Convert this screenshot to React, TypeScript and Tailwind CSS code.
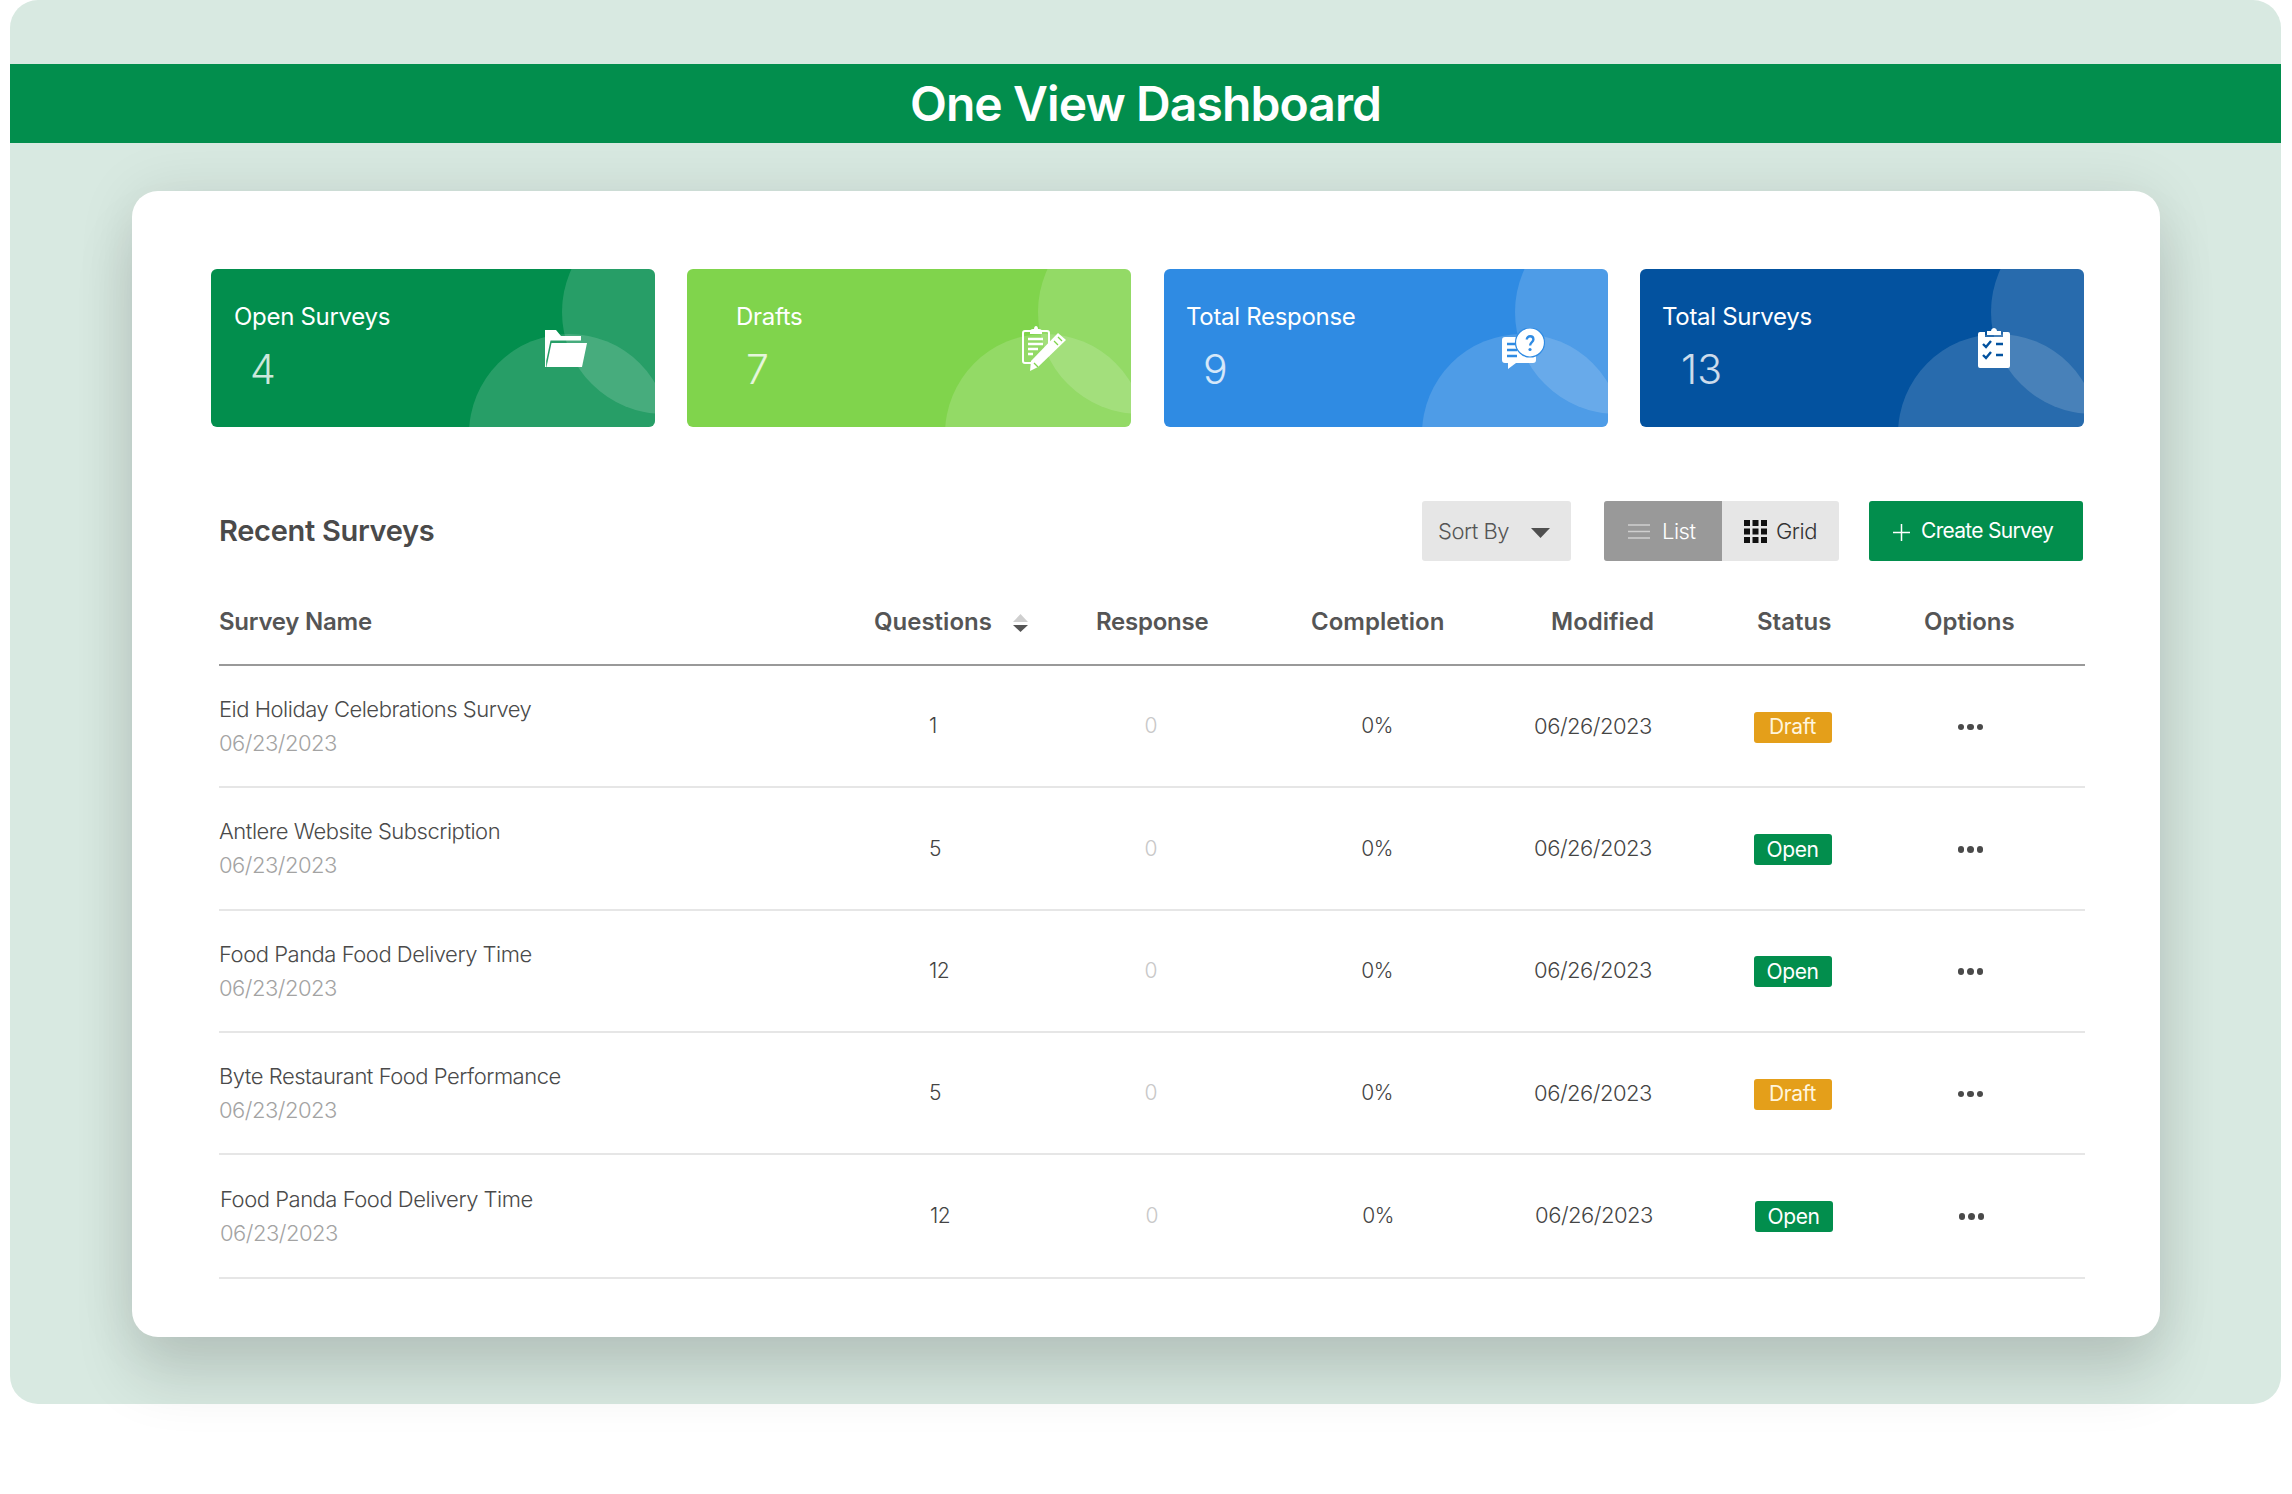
import React from "react";

const font = { fontFamily: "Inter, 'Noto Sans', sans-serif" };

function FolderIcon() {
  return (
    <svg width="42" height="37" viewBox="0 0 42 37" fill="#fff">
      <path d="M0 0H11L16 6H36V10.5H5.5L1.2 31V37H0Z" />
      <path d="M6.5 13H42L37 37H1.5Z" />
    </svg>
  );
}
function DraftIcon({ color }: { color: string }) {
  return (
    <svg width="45" height="45" viewBox="0 0 45 45" fill="none">
      <path d="M6 5H26a2 2 0 0 1 2 2V19L11 37H4a2 2 0 0 1-2-2V7a2 2 0 0 1 2-2Z" fill="none" stroke="#fff" strokeWidth="2" />
      <path d="M9 5c0-1 1-2 3-2h1c0-2 1-3 2-3s2 1 2 3h1c2 0 3 1 3 2v3H9Z" fill="#fff" />
      <path d="M7 13H22M7 18H22M7 23H17M7 28H12" stroke="#fff" strokeWidth="2.4" />
      <path d="M37 7 45 14 17 41 9 45 10 35Z" fill="#fff" />
      <path d="M37 11 41 15M33 15 37 19M13 37 17 41" stroke={color} strokeWidth="1.3" />
    </svg>
  );
}
function ResponseIcon({ color }: { color: string }) {
  return (
    <svg width="43" height="41" viewBox="0 0 43 41" fill="none">
      <path d="M3 9H22V28H34V32a3 3 0 0 1-3 3H14L6 41 6 35H3a3 3 0 0 1-3-3V12a3 3 0 0 1 3-3Z" fill="#fff" />
      <path d="M5 16H15M5 22H15M5 28H15" stroke={color} strokeWidth="2.4" />
      <circle cx="28" cy="14.5" r="14.5" fill="#fff" stroke={color} strokeWidth="1.2" />
      <path d="M24.8 11.5c0-4.3 6.6-4.3 6.6 0 0 2.6-3.3 2.6-3.3 6" stroke={color} strokeWidth="2.4" />
      <circle cx="28" cy="21.5" r="1.6" fill={color} />
    </svg>
  );
}
function SurveyIcon({ color }: { color: string }) {
  return (
    <svg width="32" height="40" viewBox="0 0 32 40" fill="none">
      <path d="M2 4H7V9H25V4H30a2 2 0 0 1 2 2V38a2 2 0 0 1-2 2H2a2 2 0 0 1-2-2V6a2 2 0 0 1 2-2Z" fill="#fff" />
      <path d="M9 7V3H13C13 1 15 0 16 0S19 1 19 3H23V7Z" fill="#fff" />
      <path d="M5 16 8 19 13 13M5 27 8 30 13 24" stroke={color} strokeWidth="2.4" />
      <path d="M18 16H25M18 27H25" stroke={color} strokeWidth="2.4" />
    </svg>
  );
}

function StatCard({ label, value, labelClass, valueClass, bg, gapClass, icon, iconClass }: {
  label: string; value: string; labelClass: string; valueClass: string; bg: string; gapClass: string; icon: React.ReactNode; iconClass: string;
}) {
  return (
    <div className={`relative h-[158px] w-[444px] shrink-0 overflow-hidden rounded-[6px] ${bg} ${gapClass}`}>
      <div className="absolute left-[258px] top-[65px] size-[200px] rounded-full bg-white/15" />
      <div className="absolute left-[351px] top-[-59px] size-[204px] rounded-full bg-white/15" />
      <div className={`relative pt-[32px] text-[24px] leading-[32px] tracking-[-0.3px] text-white ${labelClass}`}>{label}</div>
      <div className={`relative mt-[11px] text-[41px] font-light leading-[50px] text-white/80 ${valueClass}`}>{value}</div>
      <div className={`absolute ${iconClass}`}>{icon}</div>
    </div>
  );
}

const rows = [
  { name: "Eid Holiday Celebrations Survey", q: "1", status: "Draft" },
  { name: "Antlere Website Subscription", q: "5", status: "Open" },
  { name: "Food Panda Food Delivery Time", q: "12", status: "Open" },
  { name: "Byte Restaurant Food Performance", q: "5", status: "Draft" },
  { name: "Food Panda Food Delivery Time", q: "12", status: "Open", last: true },
];

function Row({ name, q, status, last }: { name: string; q: string; status: string; last?: boolean }) {
  return (
    <div className={`grid grid-cols-[710px_122px_200px_252px_180px_219px_137px_45px] items-center border-b-2 border-[#e6e6e6] text-[#555] ${last ? "h-[124px] pb-[1px] pl-px" : "h-[122.3px]"}`}>
      <div>
        <div className="text-[22px] font-light leading-[30px] tracking-[-0.48px] text-[#4a4a4a]">{name}</div>
        <div className="mt-[4px] text-[22px] font-light leading-[30px] tracking-[-0.5px] text-[#a3a3a3]">06/23/2023</div>
      </div>
      <div className="text-[21px] font-light tracking-[-0.5px] text-[#444]">{q}</div>
      <div className="text-center text-[21px] font-light text-[#c8c8c8]">0</div>
      <div className="text-center text-[21px] font-light tracking-[-0.5px] text-[#444]">0%</div>
      <div className="text-center text-[22px] font-light tracking-[-0.5px] text-[#444]">06/26/2023</div>
      <div className="flex justify-center pt-[2px]">
        <span className={`flex h-[31px] w-[78px] items-center justify-center rounded-[3px] text-[21px] tracking-[-0.4px] ${status === "Draft" ? "bg-[#e49f1a] text-[#fff5dd]" : "bg-[#028e4d] text-white"}`}>{status}</span>
      </div>
      <div className="flex justify-center gap-[3px] pt-[2px]">
        <span className="size-[6.5px] rounded-full bg-[#4a4a4a]" />
        <span className="size-[6.5px] rounded-full bg-[#4a4a4a]" />
        <span className="size-[6.5px] rounded-full bg-[#4a4a4a]" />
      </div>
      <div />
    </div>
  );
}

export default function App() {
  return (
    <div className="h-[1494px] w-full overflow-hidden bg-white pl-[10px] pr-[11px]" style={font}>
      <div className="h-[1404px] rounded-[28px] bg-[#d8e9e1] pt-[64px]">
        <div className="flex h-[79px] items-center justify-center bg-[#028e4d] text-[48px] font-semibold tracking-[-0.9px] text-white">
          One View Dashboard
        </div>
        <div className="ml-[122px] mr-[121px] mt-[48px] h-[1146px] rounded-[26px] bg-white pl-[79px] pr-[74px] pt-[78px] shadow-[0_42px_60px_rgba(0,0,0,0.12),0_0_60px_rgba(0,0,0,0.09)]">
          <div className="flex">
            <StatCard label="Open Surveys" value="4" labelClass="pl-[23px]" valueClass="pl-[39px]" bg="bg-[#028e4d]" gapClass="" icon={<FolderIcon />} iconClass="left-[334px] top-[61px]" />
            <StatCard label="Drafts" value="7" labelClass="pl-[49px]" valueClass="pl-[59px]" bg="bg-[#80d44c]" gapClass="ml-[32px]" icon={<DraftIcon color="#80d44c" />} iconClass="left-[334px] top-[57px]" />
            <StatCard label="Total Response" value="9" labelClass="pl-[22px]" valueClass="pl-[39px]" bg="bg-[#2f8be3]" gapClass="ml-[33px]" icon={<ResponseIcon color="#2f8be3" />} iconClass="left-[338px] top-[59px]" />
            <StatCard label="Total Surveys" value="13" labelClass="pl-[22px]" valueClass="pl-[41px]" bg="bg-[#03529f]" gapClass="ml-[32px]" icon={<SurveyIcon color="#03529f" />} iconClass="left-[338px] top-[59px]" />
          </div>

          <div className="mt-[74px] flex h-[60px] items-center pl-[8px] pr-[3px]">
            <div className="mr-auto text-[29px] font-semibold tracking-[-0.3px] text-[#4a4a4a]">Recent Surveys</div>
            <div className="flex h-[60px] w-[149px] items-center rounded-[3px] bg-[#e6e6e6] pl-[16px] text-[22px] font-light tracking-[-0.5px] text-[#555]">
              Sort By
              <svg className="ml-[22px] mt-[3px]" width="19" height="10" viewBox="0 0 19 10"><path d="M0 0H19L9.5 10Z" fill="#4f4f4f" /></svg>
            </div>
            <div className="ml-[33px] flex h-[60px] w-[235px] overflow-hidden rounded-[3px] bg-[#e6e6e6] text-[22px] font-light tracking-[-0.5px]">
              <div className="flex w-[118px] items-center bg-[#999] pl-[24px] text-white">
                <svg width="22" height="15" viewBox="0 0 22 15" stroke="#cfcfcf" strokeWidth="1.5"><path d="M0 1H22M0 7.5H22M0 14H22" /></svg>
                <span className="ml-[12px]">List</span>
              </div>
              <div className="flex items-center pl-[22px] text-[#333]">
                <svg width="23" height="23" viewBox="0 0 23 23" fill="#111">
                  <path d="M0 0H6V6H0ZM8.5 0H14.5V6H8.5ZM17 0H23V6H17ZM0 8.5H6V14.5H0ZM8.5 8.5H14.5V14.5H8.5ZM17 8.5H23V14.5H17ZM0 17H6V23H0ZM8.5 17H14.5V23H8.5ZM17 17H23V23H17Z" />
                </svg>
                <span className="ml-[9px]">Grid</span>
              </div>
            </div>
            <div className="ml-[30px] flex h-[60px] w-[214px] items-center rounded-[3px] bg-[#028e4d] pl-[24px] text-[21px] tracking-[-0.7px] text-white">
              <svg className="mt-[2px]" width="17" height="17" viewBox="0 0 17 17" stroke="#fff" strokeWidth="1.5"><path d="M8.5 0V17M0 8.5H17" /></svg>
              <span className="ml-[11px]">Create Survey</span>
            </div>
          </div>

          <div className="ml-[8px] mr-[1px] mt-[31px]">
            <div className="grid h-[74px] grid-cols-[655px_222px_215px_240px_206px_167px_161px] items-start border-b-2 border-[#999] pt-[14px] text-[24px] font-semibold leading-[32px] text-[#555]">
              <div className="tracking-[-0.25px]">Survey Name</div>
              <div className="flex items-center">
                Questions
                <svg className="ml-[21px] mt-[2px]" width="15" height="18" viewBox="0 0 15 18">
                  <path d="M7.5 0 15 8H0Z" fill="#cfcfcf" />
                  <path d="M0 11H15L7.5 18Z" fill="#555" />
                </svg>
              </div>
              <div className="tracking-[-0.25px]">Response</div>
              <div>Completion</div>
              <div>Modified</div>
              <div>Status</div>
              <div>Options</div>
            </div>
            {rows.map((r, i) => (
              <Row key={i} {...r} />
            ))}
          </div>
        </div>
      </div>
    </div>
  );
}
